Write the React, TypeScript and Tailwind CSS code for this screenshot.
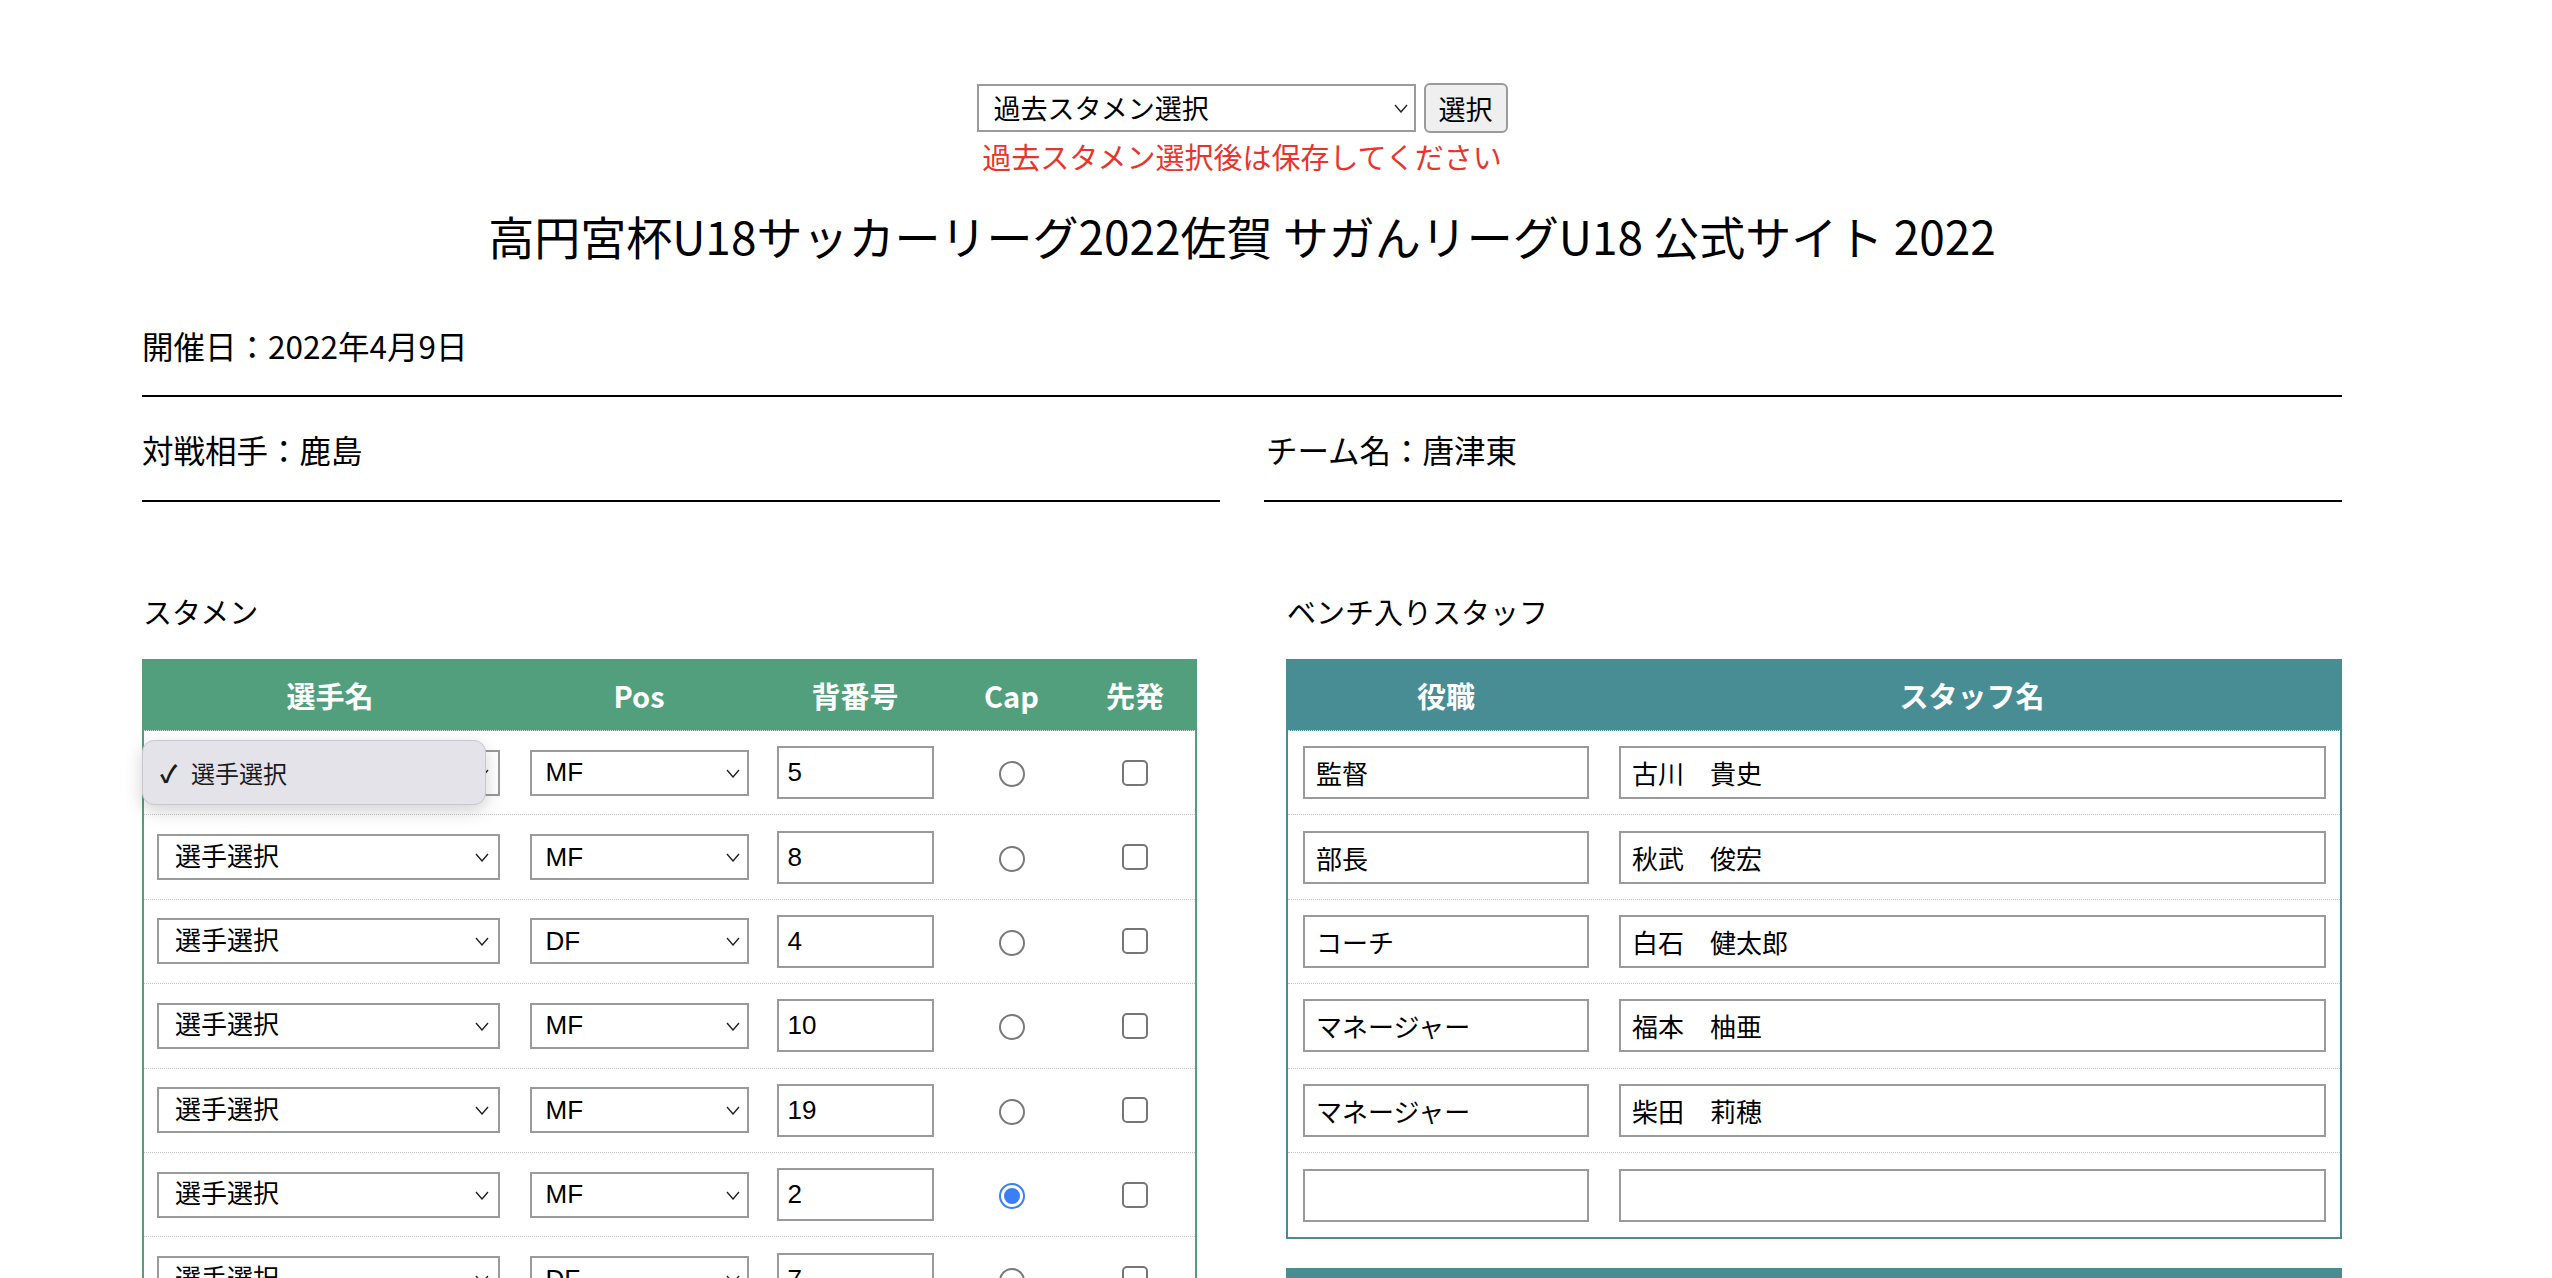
import React from "react";

const players = [
  { pos: "MF", no: "5", cap: false },
  { pos: "MF", no: "8", cap: false },
  { pos: "DF", no: "4", cap: false },
  { pos: "MF", no: "10", cap: false },
  { pos: "MF", no: "19", cap: false },
  { pos: "MF", no: "2", cap: true },
  { pos: "DF", no: "7", cap: false },
];

const staff = [
  { role: "監督", name: "古川　貴史" },
  { role: "部長", name: "秋武　俊宏" },
  { role: "コーチ", name: "白石　健太郎" },
  { role: "マネージャー", name: "福本　柚亜" },
  { role: "マネージャー", name: "柴田　莉穂" },
  { role: "", name: "" },
];

function Chevron({ className }: { className?: string }) {
  return (
    <svg
      className={className}
      width="14"
      height="9"
      viewBox="0 0 14 9"
      fill="none"
      stroke="#222"
      strokeWidth="1.4"
    >
      <polyline points="1,1 7,8 13,1" />
    </svg>
  );
}

function FauxSelect({
  value,
  width,
  padLeft,
  chevRight,
}: {
  value: string;
  width: string;
  padLeft: string;
  chevRight: string;
}) {
  return (
    <div className={`relative ${width} h-[46px]`}>
      <select
        defaultValue={value}
        className={`appearance-none w-full h-full border-2 border-[#9a9a9a] bg-white ${padLeft} text-[26px] text-black outline-none font-['Liberation_Sans','Noto_Sans_CJK_JP',sans-serif]`}
      >
        <option value={value}>{value}</option>
      </select>
      <Chevron className={`pointer-events-none absolute top-[19px] ${chevRight}`} />
    </div>
  );
}

function Radio({ checked }: { checked: boolean }) {
  if (checked) {
    return (
      <div className="w-[26px] h-[26px] rounded-full border-2 border-[#3b7ff6] flex items-center justify-center bg-white mt-[3px]">
        <div className="w-[16px] h-[16px] rounded-full bg-[#3b7ff6]" />
      </div>
    );
  }
  return <div className="w-[26px] h-[26px] rounded-full border-2 border-[#7a7a7a] bg-white mt-[3px]" />;
}

function Checkbox() {
  return <div className="w-[26px] h-[26px] rounded-[5px] border-2 border-[#767676] bg-white" />;
}

export default function App() {
  return (
    <div className="h-[1278px] overflow-hidden bg-white text-black font-['Noto_Sans_CJK_JP','Noto_Sans',sans-serif]">
      <div className="ml-[142px] w-[2200px]">
        {/* Past lineup selector */}
        <div className="flex flex-col items-center pt-[83px]">
          <div className="flex items-center gap-[8px]">
            <div className="relative w-[439px] h-[48px]">
              <select
                defaultValue="past"
                className="appearance-none w-full h-full border-2 border-[#9a9a9a] bg-white pl-[15px] text-[27px] text-black outline-none font-['Noto_Sans_CJK_JP',sans-serif]"
              >
                <option value="past">過去スタメン選択</option>
              </select>
              <Chevron className="pointer-events-none absolute top-[20px] right-[8px]" />
            </div>
            <button className="w-[84px] h-[50px] rounded-[6px] border-2 border-[#9a9a9a] bg-[#efefef] text-[27px] leading-none text-black font-['Noto_Sans_CJK_JP',sans-serif]">
              選択
            </button>
          </div>
          <p className="mt-[4px] text-[29px] leading-[38px] text-[#e8352b]">
            過去スタメン選択後は保存してください
          </p>
        </div>

        {/* Title */}
        <h1 className="mt-[30px] text-center text-[46px] leading-[60px] font-normal">
          高円宮杯U18サッカーリーグ2022佐賀 サガんリーグU18 公式サイト 2022
        </h1>

        {/* Date */}
        <div className="mt-[58px] text-[31.5px] leading-[44px] pb-[28px] border-b-2 border-black">
          開催日：2022年4月9日
        </div>

        {/* Opponent / Team */}
        <div className="mt-[30px] flex gap-[44px]">
          <div className="w-[1078px] text-[31.5px] leading-[44px] pb-[29px] border-b-2 border-black">
            対戦相手：鹿島
          </div>
          <div className="w-[1078px] pl-[2px] text-[31.5px] leading-[44px] pb-[29px] border-b-2 border-black">
            チーム名：唐津東
          </div>
        </div>

        {/* Sections */}
        <div className="mt-[89px] flex">
          {/* Starting lineup */}
          <div className="w-[1055px]">
            <div className="pl-[1px] text-[29px] leading-[40px]">スタメン</div>
            <div className="mt-[28px] border-2 border-[#529f7e]">
              <div className="grid grid-cols-[372px_246px_186px_127px_1fr] h-[70px] bg-[#529f7e] text-white text-[29px] font-bold border-b border-dotted border-[#d8d8d8]">
                <div className="flex items-center justify-center">選手名</div>
                <div className="flex items-center justify-center">Pos</div>
                <div className="flex items-center justify-center">背番号</div>
                <div className="flex items-center justify-center">Cap</div>
                <div className="flex items-center justify-center">先発</div>
              </div>
              {players.map((p, i) => (
                <div
                  key={i}
                  className="grid grid-cols-[372px_246px_186px_127px_1fr] h-[84.4px] border-b border-dotted border-[#c4c4c4]"
                >
                  <div className="relative flex items-center justify-center pr-[3px]">
                    <FauxSelect value="選手選択" width="w-[343px]" padLeft="pl-[16px]" chevRight="right-[11px]" />
                    {i === 0 && (
                      <div className="absolute left-[-2px] top-[9px] z-10 w-[344px] h-[65px] rounded-[12px] border border-[#c9c7cd] bg-[#e5e3ea] shadow-[0_6px_18px_rgba(0,0,0,0.18)] flex items-center pl-[17px] text-[24px] text-[#1a1a1a]">
                        <span className="w-[31px] font-bold text-[24px]">✓</span>
                        <span>選手選択</span>
                      </div>
                    )}
                  </div>
                  <div className="flex items-center justify-center">
                    <FauxSelect value={p.pos} width="w-[219px]" padLeft="pl-[14px]" chevRight="right-[9px]" />
                  </div>
                  <div className="flex items-center justify-center">
                    <input
                      defaultValue={p.no}
                      className="w-[157px] h-[53px] border-2 border-[#9a9a9a] bg-white pl-[9px] text-[26px] text-black outline-none font-['Liberation_Sans',sans-serif]"
                    />
                  </div>
                  <div className="flex items-center justify-center">
                    <Radio checked={p.cap} />
                  </div>
                  <div className="flex items-center justify-center">
                    <Checkbox />
                  </div>
                </div>
              ))}
            </div>
          </div>

          {/* Bench staff */}
          <div className="ml-[89px] w-[1056px]">
            <div className="pl-[1px] text-[29px] leading-[40px]">ベンチ入りスタッフ</div>
            <div className="mt-[28px] border-2 border-[#488c94]">
              <div className="grid grid-cols-[316px_1fr] h-[70px] bg-[#488c94] text-white text-[29px] font-bold border-b border-dotted border-[#d8d8d8]">
                <div className="flex items-center justify-center">役職</div>
                <div className="flex items-center justify-center">スタッフ名</div>
              </div>
              {staff.map((s, i) => (
                <div
                  key={i}
                  className={`grid grid-cols-[316px_1fr] h-[84.4px] ${
                    i < staff.length - 1 ? "border-b border-dotted border-[#c4c4c4]" : ""
                  }`}
                >
                  <div className="flex items-center px-[15px]">
                    <input
                      defaultValue={s.role}
                      className="w-full h-[53px] border-2 border-[#9a9a9a] bg-white pl-[11px] text-[26px] text-black outline-none font-['Liberation_Sans','Noto_Sans_CJK_JP',sans-serif]"
                    />
                  </div>
                  <div className="flex items-center pl-[15px] pr-[14px]">
                    <input
                      defaultValue={s.name}
                      className="w-full h-[53px] border-2 border-[#9a9a9a] bg-white pl-[11px] text-[26px] text-black outline-none font-['Liberation_Sans','Noto_Sans_CJK_JP',sans-serif]"
                    />
                  </div>
                </div>
              ))}
            </div>
            <div className="mt-[29px] h-[70px] bg-[#488c94]" />
          </div>
        </div>
      </div>
    </div>
  );
}
